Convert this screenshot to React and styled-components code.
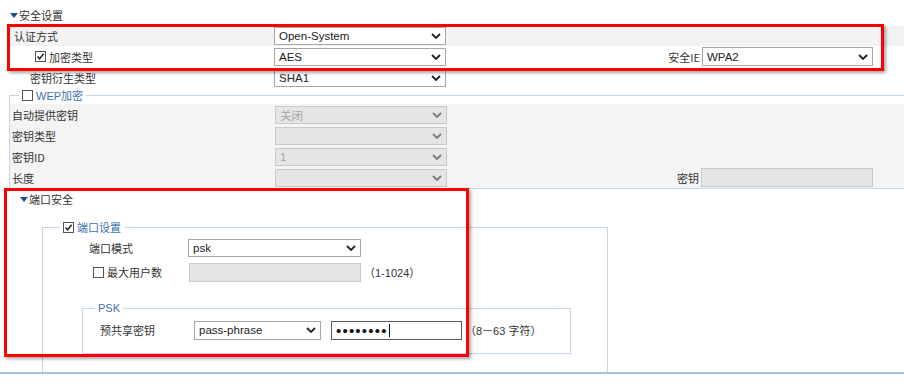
import React from 'react';
import styled, { createGlobalStyle } from 'styled-components';

const GlobalStyle = createGlobalStyle`
  html, body { margin: 0; padding: 0; background: #fff; }
  body {
    font-family: "Liberation Sans", "Noto Sans CJK SC", sans-serif;
    font-size: 11px;
    color: #333;
  }
`;

const Page = styled.div`
  position: relative;
  width: 904px;
  height: 384px;
  overflow: hidden;
  background: #fff;
`;

const Title = styled.div`
  display: flex;
  align-items: center;
  height: 16px;
  margin: ${p => p.$top}px 0 ${p => p.$bottom}px ${p => p.$left}px;
  font-family: "Noto Sans CJK SC", sans-serif;
  font-size: 11px;
  color: #333;
`;

const Arrow = styled.span`
  width: 0;
  height: 0;
  margin-right: 1px;
  border-left: 4px solid transparent;
  border-right: 4px solid transparent;
  border-top: 5px solid #1d4f8f;
`;

const Row = styled.div`
  display: flex;
  align-items: center;
  height: ${p => p.$h || 21}px;
  margin-top: ${p => p.$gap || 0}px;
  background: ${p => p.$bg || 'transparent'};
  padding-right: ${p => p.$right || 0}px;
`;

const Label = styled.div`
  display: flex;
  align-items: center;
  box-sizing: border-box;
  width: ${p => p.$w}px;
  padding-left: ${p => p.$pad || 0}px;
  font-family: "Noto Sans CJK SC", sans-serif;
  font-size: 11px;
  color: #333;
  white-space: nowrap;
`;

const SideLabel = styled.span`
  margin-left: auto;
  margin-right: 2px;
  font-family: "Noto Sans CJK SC", sans-serif;
  font-size: 11px;
  color: #333;
`;

const Box = styled.div`
  position: relative;
  box-sizing: border-box;
  display: flex;
  align-items: center;
  width: ${p => p.$w || 172}px;
  height: ${p => p.$h || 18}px;
  padding-left: 4px;
  border: 1px solid ${p => (p.$off ? '#c9c9c9' : p.$dark ? '#5a5a5a' : '#a6a6a6')};
  background: ${p => (p.$off ? '#e5e5e5' : '#fff')};
  color: ${p => (p.$off ? '#a5a5a5' : '#222')};
  font-family: "Liberation Sans", "Noto Sans CJK SC", sans-serif;
  font-size: 11.5px;
`;

const Chevron = styled.svg`
  position: absolute;
  right: 4px;
  top: 50%;
  margin-top: -3px;
`;

const Check = styled.span`
  box-sizing: border-box;
  display: inline-flex;
  align-items: center;
  justify-content: center;
  width: 11px;
  height: 11px;
  margin-right: 3px;
  border: 1px solid #555;
  background: #fff;
`;

const Note = styled.span`
  margin-left: 3px;
  font-family: "Liberation Sans", "Noto Sans CJK SC", sans-serif;
  font-size: 11px;
  color: #333;
  white-space: nowrap;
`;

const Dots = styled.span`
  font-size: 15px;
  letter-spacing: 1.2px;
  color: #111;
  line-height: 1;
`;

const Caret = styled.span`
  width: 1px;
  height: 13px;
  background: #111;
`;

const Fieldset = styled.fieldset`
  box-sizing: border-box;
  margin: ${p => p.$mt || 0}px 0 ${p => p.$mb || 0}px ${p => p.$ml}px;
  padding: ${p => p.$pt || 0}px 0 ${p => p.$pb || 0}px 0;
  width: ${p => p.$w}px;
  border: 1px solid #c4d5ec;
  ${p => p.$open && 'border-bottom: none;'}
  min-width: 0;
`;

const Legend = styled.legend`
  display: flex;
  align-items: center;
  height: 14px;
  margin-left: ${p => p.$ml}px;
  padding: 0 3px;
  font-family: "Liberation Sans", "Noto Sans CJK SC", sans-serif;
  font-size: 11px;
  color: #3d6fb5;
`;

const PortArea = styled.div`
  border-bottom: 2px solid #a7c3e0;
`;

const Mark = styled.div`
  position: absolute;
  box-sizing: border-box;
  border: 3px solid #ff0000;
  box-shadow: 2px 2px 3px rgba(0, 0, 0, 0.35);
  pointer-events: none;
`;

function Select({ value, w, h, off }) {
  return (
    <Box $w={w} $h={h} $off={off}>
      {value}
      <Chevron width="10" height="6" viewBox="0 0 10 6">
        <path d="M1 1 L5 5 L9 1" fill="none" stroke={off ? '#7a7a7a' : '#222'} strokeWidth="1.8" />
      </Chevron>
    </Box>
  );
}

function CheckBox({ checked }) {
  return (
    <Check>
      {checked && (
        <svg width="9" height="9" viewBox="0 0 9 9">
          <path d="M1.5 4.5 L3.6 6.8 L7.6 1.8" fill="none" stroke="#222" strokeWidth="1.5" />
        </svg>
      )}
    </Check>
  );
}

export default function App() {
  return (
    <>
      <GlobalStyle />
      <Page>
        <Title $top={7} $bottom={3} $left={10}>
          <Arrow />安全设置
        </Title>

        <Row $bg="#f2f2f2" $h={20} style={{ marginLeft: 8 }}>
          <Label $w={266} $pad={6}>认证方式</Label>
          <Select value="Open-System" />
        </Row>
        <Row $right={31} style={{ marginLeft: 8 }}>
          <Label $w={266} $pad={27}>
            <CheckBox checked />加密类型
          </Label>
          <Select value="AES" />
          <SideLabel>安全IE</SideLabel>
          <Select value="WPA2" w={171} h={19} />
        </Row>
        <Row style={{ marginLeft: 8 }}>
          <Label $w={266} $pad={22}>密钥衍生类型</Label>
          <Select value="SHA1" />
        </Row>

        <Fieldset $ml={9} $w={896} $pt={2} $mb={0}>
          <Legend $ml={9}>
            <CheckBox />WEP加密
          </Legend>
          <Row $bg="#f4f4f4" $right={31}>
            <Label $w={265} $pad={2}>自动提供密钥</Label>
            <Select value="关闭" off />
          </Row>
          <Row $bg="#f4f4f4" $right={31}>
            <Label $w={265} $pad={2}>密钥类型</Label>
            <Select value="" off />
          </Row>
          <Row $bg="#f4f4f4" $right={31}>
            <Label $w={265} $pad={2}>密钥ID</Label>
            <Select value="1" off />
          </Row>
          <Row $bg="#f4f4f4" $right={31}>
            <Label $w={265} $pad={2}>长度</Label>
            <Select value="" off />
            <SideLabel>密钥</SideLabel>
            <Box $w={172} $h={19} $off />
          </Row>
        </Fieldset>

        <PortArea>
          <Title $top={2} $bottom={13} $left={20}>
            <Arrow />端口安全
          </Title>
          <Fieldset $ml={42} $w={566} $pt={3} $open>
            <Legend $ml={17}>
              <CheckBox checked />端口设置
            </Legend>
            <Row $h={22}>
              <Label $w={145} $pad={46}>端口模式</Label>
              <Select value="psk" w={173} h={18} />
            </Row>
            <Row $h={22} $gap={2}>
              <Label $w={146} $pad={50}>
                <CheckBox />最大用户数
              </Label>
              <Box $w={172} $h={19} $off />
              <Note>（1-1024）</Note>
            </Row>

            <Fieldset $ml={39} $w={489} $mt={18} $mb={18} $pt={4} $pb={12}>
              <Legend $ml={12}>PSK</Legend>
              <Row $h={22}>
                <Label $w={111} $pad={17}>预共享密钥</Label>
                <Select value="pass-phrase" w={127} h={19} />
                <Box $w={131} $h={19} $dark style={{ marginLeft: 10, gap: 1 }}>
                  <Dots>••••••••</Dots>
                  <Caret />
                </Box>
                <Note>（8－63 字符）</Note>
              </Row>
            </Fieldset>
          </Fieldset>
        </PortArea>

        <Mark style={{ left: 7, top: 24, width: 877, height: 47 }} />
        <Mark style={{ left: 4, top: 188, width: 465, height: 169 }} />
      </Page>
    </>
  );
}
